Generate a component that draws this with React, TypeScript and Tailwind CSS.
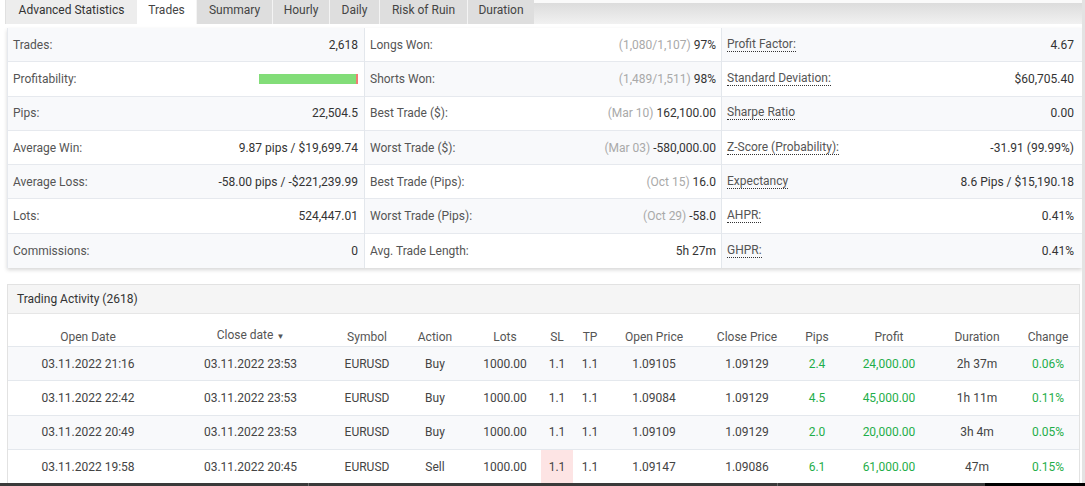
import React from "react";

type Stat = { label: string; note?: string; value?: string; bar?: boolean };

const col1: Stat[] = [
  { label: "Trades:", value: "2,618" },
  { label: "Profitability:", bar: true },
  { label: "Pips:", value: "22,504.5" },
  { label: "Average Win:", value: "9.87 pips / $19,699.74" },
  { label: "Average Loss:", value: "-58.00 pips / -$221,239.99" },
  { label: "Lots:", value: "524,447.01" },
  { label: "Commissions:", value: "0" },
];

const col2: Stat[] = [
  { label: "Longs Won:", note: "(1,080/1,107)", value: "97%" },
  { label: "Shorts Won:", note: "(1,489/1,511)", value: "98%" },
  { label: "Best Trade ($):", note: "(Mar 10)", value: "162,100.00" },
  { label: "Worst Trade ($):", note: "(Mar 03)", value: "-580,000.00" },
  { label: "Best Trade (Pips):", note: "(Oct 15)", value: "16.0" },
  { label: "Worst Trade (Pips):", note: "(Oct 29)", value: "-58.0" },
  { label: "Avg. Trade Length:", value: "5h 27m" },
];

const col3: Stat[] = [
  { label: "Profit Factor:", value: "4.67" },
  { label: "Standard Deviation:", value: "$60,705.40" },
  { label: "Sharpe Ratio", value: "0.00" },
  { label: "Z-Score (Probability):", value: "-31.91 (99.99%)" },
  { label: "Expectancy", value: "8.6 Pips / $15,190.18" },
  { label: "AHPR:", value: "0.41%" },
  { label: "GHPR:", value: "0.41%" },
];

const tabs = [
  { name: "Advanced Statistics", w: "w-[132px]", kind: "first" },
  { name: "Trades", w: "w-[59px]", kind: "active" },
  { name: "Summary", w: "w-[76px]", kind: "" },
  { name: "Hourly", w: "w-[57px]", kind: "" },
  { name: "Daily", w: "w-[50px]", kind: "" },
  { name: "Risk of Ruin", w: "w-[88px]", kind: "" },
  { name: "Duration", w: "w-[67px]", kind: "" },
];

const headers = [
  "Open Date",
  "Close date",
  "Symbol",
  "Action",
  "Lots",
  "SL",
  "TP",
  "Open Price",
  "Close Price",
  "Pips",
  "Profit",
  "Duration",
  "Change",
];

const trades = [
  ["03.11.2022 21:16", "03.11.2022 23:53", "EURUSD", "Buy", "1000.00", "1.1", "1.1", "1.09105", "1.09129", "2.4", "24,000.00", "2h 37m", "0.06%"],
  ["03.11.2022 22:42", "03.11.2022 23:53", "EURUSD", "Buy", "1000.00", "1.1", "1.1", "1.09084", "1.09129", "4.5", "45,000.00", "1h 11m", "0.11%"],
  ["03.11.2022 20:49", "03.11.2022 23:53", "EURUSD", "Buy", "1000.00", "1.1", "1.1", "1.09109", "1.09129", "2.0", "20,000.00", "3h 4m", "0.05%"],
  ["03.11.2022 19:58", "03.11.2022 20:45", "EURUSD", "Sell", "1000.00", "1.1", "1.1", "1.09147", "1.09086", "6.1", "61,000.00", "47m", "0.15%"],
];

const greenCols = [9, 10, 12];
const gridCols =
  "grid grid-cols-[160px_165px_68px_68px_72px_32px_34px_94px_92px_48px_96px_80px_1fr]";

function StatColumn({
  items,
  tintEven,
  dotted,
  border,
  pr,
}: {
  items: Stat[];
  tintEven: boolean;
  dotted?: boolean;
  border?: boolean;
  pr: string;
}) {
  return (
    <div className={`flex flex-col ${border ? "border-l border-[#e3e7ec]" : ""}`}>
      {items.map((s, i) => {
        const tinted = tintEven ? i % 2 === 0 : i % 2 === 1;
        return (
          <div
            key={s.label}
            className={`flex h-[34.3px] items-center justify-between pl-[5px] ${pr} ${
              i < items.length - 1 ? "border-b border-[#e6e9ee]" : ""
            } ${tinted ? "bg-[#f8f9fb]" : "bg-white"}`}
          >
            <span
              className={`text-[#555] ${
                dotted ? "border-b border-dotted border-[#333] leading-[13px] text-[#444]" : ""
              }`}
            >
              {s.label}
            </span>
            {s.bar ? (
              <div className="flex h-[10px] w-[99px]">
                <div className="flex-1 bg-[#82dd78]" />
                <div className="w-[2px] bg-[#f07c74]" />
              </div>
            ) : (
              <span className="text-[#333]">
                {s.note && <span className="text-[#a9a9a9]">{s.note} </span>}
                {s.value}
              </span>
            )}
          </div>
        );
      })}
    </div>
  );
}

export default function App() {
  return (
    <div
      className="relative flex h-[486px] w-[1085px] overflow-hidden bg-white text-[12px] leading-[14px]"
      style={{ fontFamily: "Roboto, 'Liberation Sans', sans-serif" }}
    >
      <div className="flex w-[1082px] flex-col">
        {/* Tabs */}
        <div className="ml-[5px] flex h-[24px]">
          {tabs.map((t) => (
            <div
              key={t.name}
              className={`${t.w} flex items-start justify-center pt-[3px] ${
                t.kind === "active"
                  ? "bg-white text-[#444]"
                  : t.kind === "first"
                  ? "border-l border-[#e0e0e0] bg-[#ededed] text-[#333]"
                  : "border-l border-[#f4f4f4] bg-[#dedede] text-[#444]"
              }`}
            >
              {t.name}
            </div>
          ))}
          <div className="flex-1 border-t-[3px] border-[#fafafa] bg-gradient-to-b from-[#dcdcdc] to-[#f1f1f1]" />
        </div>

        {/* Stats panel */}
        <div className="ml-[7px] mt-[4px] grid grid-cols-[356px_357px_1fr] border-l border-[#e6e9ee] shadow-[0_2px_4px_rgba(0,0,0,0.16)]">
          <StatColumn items={col1} tintEven pr="pr-[6px]" />
          <StatColumn items={col2} tintEven={false} border pr="pr-[5px]" />
          <StatColumn items={col3} tintEven dotted border pr="pr-[8px]" />
        </div>

        {/* Trading activity */}
        <div className="ml-[7px] mr-[2px] mt-[16px] flex flex-1 flex-col border border-[#e2e2e2] border-b-0">
          <div className="flex h-[29px] items-center border-b border-[#e6e6e6] bg-[#f5f5f5] pl-[9px] text-[#333]">
            Trading Activity (2618)
          </div>
          <div className={`${gridCols} h-[32px] pt-[16px] text-[#555]`}>
            {headers.map((h) => (
              <div key={h} className="text-center">
                {h === "Close date" ? (
                  <span className="relative top-[-2px]">
                    Close date <span className="text-[8px]">▼</span>
                  </span>
                ) : (
                  h
                )}
              </div>
            ))}
          </div>
          {trades.map((r, ri) => (
            <div
              key={ri}
              className={`${gridCols} h-[34.3px] border-t border-[#e4e8ed] ${
                ri % 2 === 0 ? "bg-[#f8f9fb]" : "bg-white"
              }`}
            >
              {r.map((c, ci) => (
                <div
                  key={ci}
                  className={`flex items-center justify-center ${
                    greenCols.includes(ci) ? "text-[#1fae4a]" : "text-[#444]"
                  } ${ri === 3 && ci === 5 ? "bg-[#fde4e4]" : ""}`}
                >
                  {c}
                </div>
              ))}
            </div>
          ))}
        </div>
      </div>
      <div className="w-[3px] bg-[#e3e3e3]" />

      {/* bottom bar overlay */}
      <div className="absolute bottom-0 left-0 flex h-[3px] w-full">
        <div className="w-[308px] bg-[#3a3a3a]" />
        <div className="w-[1px] bg-[#6a6a6a]" />
        <div className="w-[468px] bg-[#3a3a3a]" />
        <div className="w-[1px] bg-[#6a6a6a]" />
        <div className="w-[207px] bg-[#3a3a3a]" />
        <div className="flex-1 bg-black" />
      </div>
    </div>
  );
}
